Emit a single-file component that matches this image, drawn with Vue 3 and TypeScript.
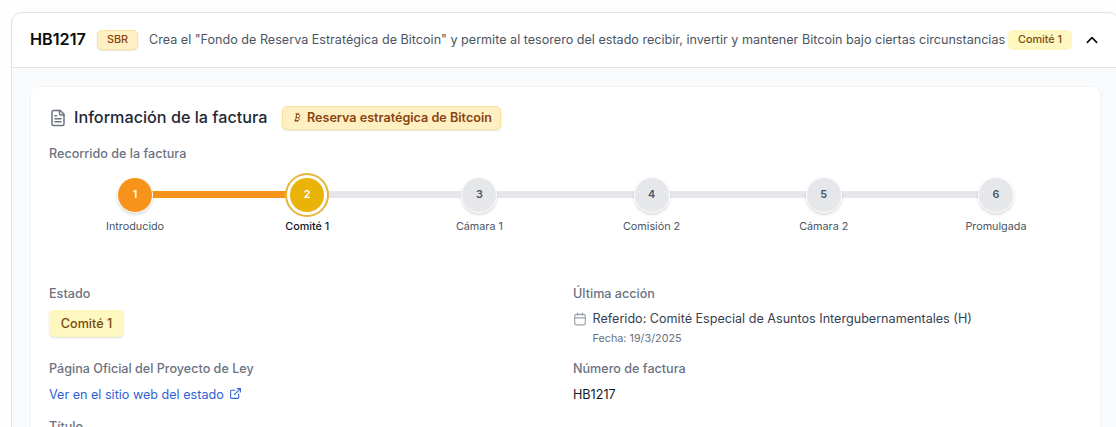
<script setup lang="ts">
interface Step {
  label: string
  state: 'done' | 'current' | 'pending'
}

const steps: Step[] = [
  { label: 'Introducido', state: 'done' },
  { label: 'Comité 1', state: 'current' },
  { label: 'Cámara 1', state: 'pending' },
  { label: 'Comisión 2', state: 'pending' },
  { label: 'Cámara 2', state: 'pending' },
  { label: 'Promulgada', state: 'pending' },
]
</script>

<template>
  <div class="page">
    <article class="bill">
      <header class="bill-head">
        <h2 class="bill-id">HB1217</h2>
        <span class="tag tag-amber">SBR</span>
        <p class="summary">Crea el "Fondo de Reserva Estratégica de Bitcoin" y permite al tesorero del estado recibir, invertir y mantener Bitcoin bajo ciertas circunstancias</p>
        <span class="tag tag-yellow">Comité 1</span>
        <svg class="chevron" viewBox="0 0 24 24" fill="none" stroke="currentColor" stroke-width="2.8" stroke-linecap="round" stroke-linejoin="round"><path d="m20 16-8-8-8 8" /></svg>
      </header>
      <div class="bill-body">
        <section class="panel">
          <div class="panel-title">
            <svg class="doc" viewBox="0 0 24 24" fill="none" stroke="currentColor" stroke-width="2" stroke-linecap="round" stroke-linejoin="round"><path d="M15 2H6a2 2 0 0 0-2 2v16a2 2 0 0 0 2 2h12a2 2 0 0 0 2-2V7Z" /><path d="M14 2v4a2 2 0 0 0 2 2h4" /><path d="M10 9H8" /><path d="M16 13H8" /><path d="M16 17H8" /></svg>
            <h3>Información de la factura</h3>
            <span class="reserve">
              <svg class="btc" viewBox="0 0 24 24" fill="none" stroke="currentColor" stroke-width="2" stroke-linecap="round" stroke-linejoin="round"><path d="M11.767 19.089c4.924.868 6.14-6.025 1.216-6.894m-1.216 6.894L5.86 18.047m5.908 1.042-.347 1.97m1.563-8.864c4.924.869 6.14-6.025 1.215-6.893m-1.215 6.893-3.94-.694m5.155-6.2L8.29 4.26m5.908 1.042.348-1.97M7.48 20.364l3.126-17.727" /></svg>
              <span>Reserva estratégica de Bitcoin</span>
            </span>
          </div>
          <h4 class="label journey-label">Recorrido de la factura</h4>
          <ol class="steps">
            <li v-for="(step, i) in steps" :key="step.label" class="step" :class="step.state">
              <span class="dot">{{ i + 1 }}</span>
              <span class="step-label">{{ step.label }}</span>
            </li>
          </ol>
          <div class="details">
            <div class="field">
              <h4 class="label">Estado</h4>
              <span class="status">Comité 1</span>
            </div>
            <div class="field">
              <h4 class="label">Última acción</h4>
              <div class="action">
                <svg class="calendar" viewBox="0 0 24 24" fill="none" stroke="currentColor" stroke-width="2" stroke-linecap="round" stroke-linejoin="round"><path d="M8 2v4M16 2v4" /><rect width="18" height="18" x="3" y="4" rx="2" /><path d="M3 10h18" /></svg>
                <div>
                  <p class="action-text">Referido: Comité Especial de Asuntos Intergubernamentales (H)</p>
                  <p class="action-date">Fecha: 19/3/2025</p>
                </div>
              </div>
            </div>
            <div class="field">
              <h4 class="label">Página Oficial del Proyecto de Ley</h4>
              <a class="link">
                <span>Ver en el sitio web del estado</span>
                <svg class="external" viewBox="0 0 24 24" fill="none" stroke="currentColor" stroke-width="2" stroke-linecap="round" stroke-linejoin="round"><path d="M15 3h6v6" /><path d="M10 14 21 3" /><path d="M18 13v6a2 2 0 0 1-2 2H5a2 2 0 0 1-2-2V8a2 2 0 0 1 2-2h6" /></svg>
              </a>
            </div>
            <div class="field">
              <h4 class="label">Número de factura</h4>
              <p class="number">HB1217</p>
            </div>
            <div class="field">
              <h4 class="label">Título</h4>
            </div>
          </div>
        </section>
      </div>
    </article>
  </div>
</template>

<style>
body {
  margin: 0;
  background: #fefefe;
  overflow: hidden;
}
</style>

<style scoped>
.page {
  box-sizing: border-box;
  width: 1120px;
  height: 427px;
  padding: 12px 0 0 11px;
  overflow: hidden;
  font-family: Inter, "Liberation Sans", sans-serif;
  font-size: 12.6px;
  color: #111827;
}
h2, h3, h4, p, ol {
  margin: 0;
  padding: 0;
}
svg {
  display: block;
  flex: none;
}
.bill {
  box-sizing: border-box;
  width: 1109px;
  height: 600px;
  border: 1px solid #e2e4e8;
  border-radius: 11px;
  overflow: hidden;
  background: #fff;
  box-shadow: 0 1px 2px rgba(0, 0, 0, 0.05);
}
.bill-head {
  box-sizing: border-box;
  display: flex;
  align-items: center;
  height: 55px;
  padding: 0 20px 1px 18px;
  border-bottom: 1px solid #e2e4e8;
  white-space: nowrap;
}
.bill-id {
  flex: none;
  width: 67px;
  padding-bottom: 2px;
  font-size: 16.2px;
  line-height: 24px;
  font-weight: 600;
  color: #0a0a0a;
}
.tag {
  box-sizing: border-box;
  display: flex;
  flex: none;
  align-items: center;
  justify-content: center;
  height: 20px;
  border-radius: 5px;
  font-size: 10.8px;
  font-weight: 500;
  padding-bottom: 1px;
}
.tag-amber {
  width: 41px;
  margin-right: 11px;
  background: #fef0c3;
  border: 1px solid #fbe29a;
  color: #8a4310;
  box-shadow: 0 1px 2px rgba(0, 0, 0, 0.1);
}
.tag-yellow {
  width: 64px;
  background: #fef7bf;
  color: #7a4a10;
}
.summary {
  flex: none;
  width: 859px;
  font-size: 12.6px;
  line-height: 18px;
  color: #4b5563;
}
.chevron {
  width: 14px;
  height: 14px;
  margin: 1px 0 0 13px;
  color: #0a0a0a;
}
.bill-body {
  padding: 18px;
  height: 540px;
  background: #f9fafb;
}
.panel {
  box-sizing: border-box;
  width: 1071px;
  height: 500px;
  padding: 18px;
  border: 1px solid #f3f4f6;
  border-radius: 8px;
  background: #fff;
  box-shadow: 0 1px 2px rgba(0, 0, 0, 0.03);
}
.panel-title {
  display: flex;
  align-items: center;
  height: 25px;
}
.doc {
  width: 18px;
  height: 18px;
  margin-right: 7px;
  color: #6b7280;
}
.panel-title h3 {
  width: 208px;
  padding-bottom: 1px;
  font-size: 16.2px;
  line-height: 24px;
  font-weight: 500;
  color: #1f2937;
  white-space: nowrap;
}
.reserve {
  box-sizing: border-box;
  display: flex;
  align-items: center;
  width: 219px;
  height: 24px;
  padding-left: 9px;
  border: 1px solid #fbe29a;
  border-radius: 5px;
  background: #fef0c3;
  color: #8a4310;
  font-size: 12.6px;
  font-weight: 600;
  white-space: nowrap;
  box-shadow: 0 1px 2px rgba(0, 0, 0, 0.1);
}
.btc {
  width: 11px;
  height: 11px;
  margin-right: 4px;
}
.label {
  font-size: 12.6px;
  line-height: 18px;
  font-weight: 500;
  color: #6b7280;
}
.journey-label {
  margin-top: 15px;
}
.steps {
  display: grid;
  grid-template-columns: repeat(6, 1fr);
  height: 108px;
  margin-top: 14px;
  list-style: none;
}
.step {
  position: relative;
  display: flex;
  flex-direction: column;
  align-items: center;
}
.step + .step::before {
  content: "";
  position: absolute;
  top: 14px;
  left: -50%;
  width: 100%;
  height: 7px;
  background: #e5e7eb;
}
.step.current::before {
  background: #f7931a;
}
.dot {
  position: relative;
  z-index: 1;
  box-sizing: border-box;
  display: flex;
  align-items: center;
  justify-content: center;
  width: 36px;
  height: 36px;
  padding-bottom: 1px;
  border: 1px solid #fff;
  border-radius: 50%;
  background: #e5e7eb;
  color: #4b5563;
  font-size: 10.8px;
  font-weight: 600;
  box-shadow: 0 2px 3px rgba(0, 0, 0, 0.13);
}
.done .dot {
  background: #f7931a;
  color: #fff;
}
.current .dot {
  background: #eab308;
  color: #fff;
  box-shadow: 0 0 0 2px #fff, 0 0 0 4px #e5b53a;
}
.step-label {
  margin-top: 6px;
  font-size: 10.8px;
  line-height: 15px;
  color: #4b5563;
}
.current .step-label {
  color: #111827;
  font-weight: 500;
}
.details {
  display: grid;
  grid-template-columns: 509px 509px;
  column-gap: 15px;
  grid-template-rows: 75px 58px 40px;
}
.status {
  display: flex;
  align-items: center;
  justify-content: center;
  width: 75px;
  height: 27px;
  margin-top: 7px;
  border-radius: 5px;
  background: #fef7bf;
  color: #7a4a10;
  font-size: 12.6px;
  font-weight: 500;
  box-shadow: 0 1px 2px rgba(0, 0, 0, 0.13);
}
.action {
  display: flex;
  margin-top: 7px;
}
.calendar {
  width: 14px;
  height: 14px;
  margin: 2px 5.5px 0 0;
  color: #9ca3af;
}
.action-text {
  font-size: 12.6px;
  line-height: 18px;
  color: #374151;
}
.action-date {
  margin-top: 3px;
  font-size: 10.8px;
  line-height: 15px;
  color: #6b7280;
}
.link {
  display: flex;
  align-items: center;
  margin-top: 8px;
  line-height: 18px;
  color: #2f62d9;
}
.external {
  width: 13px;
  height: 13px;
  margin: -3px 0 0 5px;
}
.number {
  margin-top: 8px;
  line-height: 18px;
  color: #111827;
}
</style>
